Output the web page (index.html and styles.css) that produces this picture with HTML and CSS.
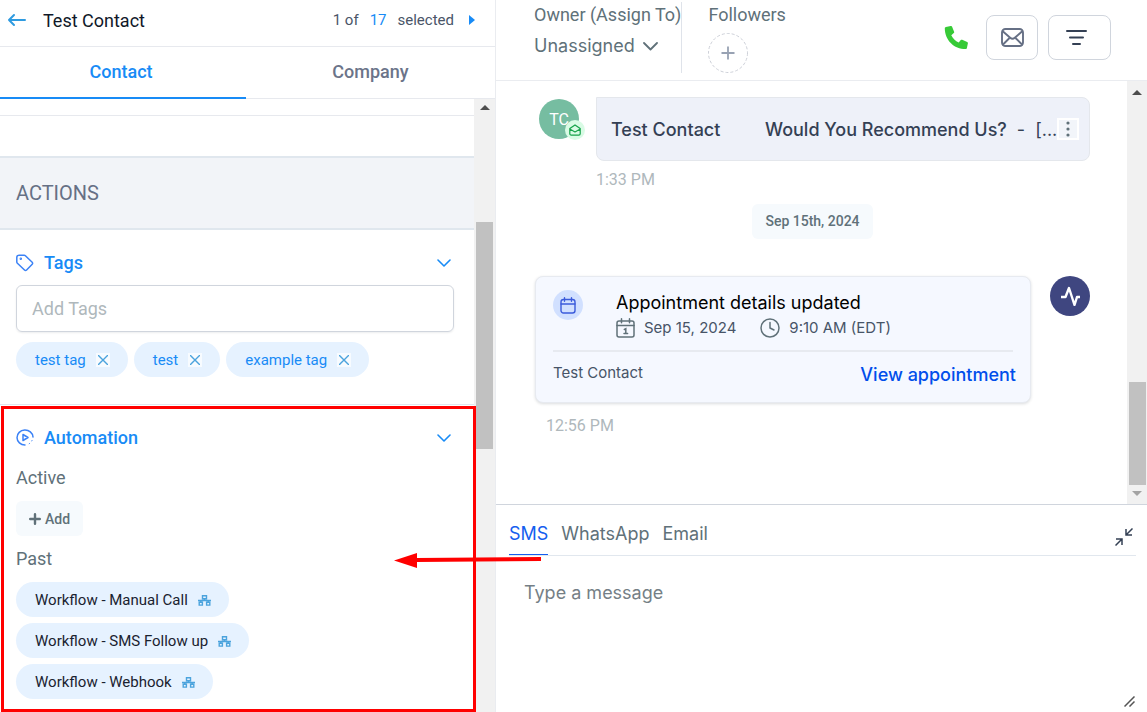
FILE: index.html
```
<!DOCTYPE html>
<html lang="en">
<head>
    <meta charset="UTF-8">
    <title>Test Contact</title>
    <link rel="stylesheet" href="styles.css">
</head>
<body>
    <aside class="sidebar">
        <header class="sidebar-header">
            <button class="icon-btn" aria-label="Back">
                <svg width="20" height="16" viewBox="0 0 20 16" fill="none" stroke="#2f9be0" stroke-width="2" stroke-linecap="round" stroke-linejoin="round"><path d="M18 8H2M7 3L2 8l5 5"/></svg>
            </button>
            <h1>Test Contact</h1>
            <div class="pager">
                <span>1 of</span>
                <a href="#">17</a>
                <span>selected</span>
                <button class="icon-btn" aria-label="Next contact">
                    <svg width="6" height="10" viewBox="0 0 6 10" fill="#188bf6"><path d="M0 0l6 5-6 5z"/></svg>
                </button>
            </div>
        </header>
        <nav class="tabs">
            <button class="tab active">Contact</button>
            <button class="tab">Company</button>
        </nav>

        <div class="sidebar-body">
            <div class="panel">
                <div class="panel-gap"></div>
                <h2 class="panel-title">ACTIONS</h2>

                <section class="section tags">
                    <button class="section-head">
                        <svg width="18" height="18" viewBox="0 0 18 18" fill="none" stroke="#3b82f6" stroke-width="1.5" stroke-linejoin="round"><path d="M3 1.2h5.2c.5 0 .9.2 1.2.5l6.8 6.6c.6.6.6 1.4 0 2l-5.6 5.7c-.6.6-1.5.6-2.1 0L1.4 9.2c-.4-.4-.6-.8-.6-1.3V3.4c0-1.2 1-2.2 2.2-2.2z"/><circle cx="4.8" cy="4.8" r=".5"/></svg>
                        <span>Tags</span>
                        <svg class="chevron" width="14" height="9" viewBox="0 0 14 9" fill="none" stroke="#188bf6" stroke-width="1.6" stroke-linecap="round" stroke-linejoin="round"><path d="M1 2l6 6 6-6"/></svg>
                    </button>
                    <input class="tag-input" type="text" placeholder="Add Tags" aria-label="Add Tags">
                    <div class="pills">
                        <span class="pill">test tag <button class="remove" aria-label="Remove test tag"><svg width="10" height="10" viewBox="0 0 10 10" stroke="#4ba3dd" stroke-width="1.4"><path d="M0 0l10 10M10 0L0 10"/></svg></button></span>
                        <span class="pill">test <button class="remove" aria-label="Remove test"><svg width="10" height="10" viewBox="0 0 10 10" stroke="#4ba3dd" stroke-width="1.4"><path d="M0 0l10 10M10 0L0 10"/></svg></button></span>
                        <span class="pill">example tag <button class="remove" aria-label="Remove example tag"><svg width="10" height="10" viewBox="0 0 10 10" stroke="#4ba3dd" stroke-width="1.4"><path d="M0 0l10 10M10 0L0 10"/></svg></button></span>
                    </div>
                </section>

                <section class="section automation">
                    <button class="section-head">
                        <svg width="18" height="18" viewBox="0 0 18 18" fill="none" stroke="#3b82f6" stroke-width="1.5" stroke-linecap="round" stroke-linejoin="round"><path d="M17 8A8 7.500 0 1 0 9 16"/><path d="M7 5.500l5 3-5 3z"/><path d="M16 11.500l-.2.400M13.500 14.500l-.3.200" stroke-width="1"/></svg>
                        <span>Automation</span>
                        <svg class="chevron" width="14" height="9" viewBox="0 0 14 9" fill="none" stroke="#188bf6" stroke-width="1.6" stroke-linecap="round" stroke-linejoin="round"><path d="M1 2l6 6 6-6"/></svg>
                    </button>
                    <h3>Active</h3>
                    <button class="add-btn">
                        <svg width="12" height="12" viewBox="0 0 12 12" stroke="#607179" stroke-width="2.4" stroke-linecap="round"><path d="M6 1.200v9.600M1.200 6h9.600"/></svg>
                        Add
                    </button>
                    <h3>Past</h3>
                    <div class="pills stacked">
                        <a href="#" class="pill workflow">Workflow - Manual Call <svg width="13" height="11" viewBox="0 0 13 11" fill="none" stroke="#4ba3dd" stroke-width="1.4"><path d="M4.500.7h4v3h-4zM1.200 7.300h3.200v2.800H1.200zM8.600 7.300h3.200v2.800H8.600zM6.500 3.700v1.800M0 5.500h13M2.800 5.500v1.800M10.200 5.500v1.800"/></svg></a>
                        <a href="#" class="pill workflow">Workflow - SMS Follow up <svg width="13" height="11" viewBox="0 0 13 11" fill="none" stroke="#4ba3dd" stroke-width="1.4"><path d="M4.500.7h4v3h-4zM1.200 7.300h3.200v2.800H1.200zM8.600 7.300h3.200v2.800H8.600zM6.500 3.700v1.800M0 5.500h13M2.800 5.500v1.800M10.200 5.500v1.800"/></svg></a>
                        <a href="#" class="pill workflow">Workflow - Webhook <svg width="13" height="11" viewBox="0 0 13 11" fill="none" stroke="#4ba3dd" stroke-width="1.4"><path d="M4.500.7h4v3h-4zM1.200 7.300h3.200v2.800H1.200zM8.600 7.300h3.200v2.800H8.600zM6.500 3.700v1.800M0 5.500h13M2.800 5.500v1.800M10.200 5.500v1.800"/></svg></a>
                    </div>
                    <div class="highlight"></div>
                    <svg class="pointer" width="148" height="16" viewBox="0 0 148 16"><path d="M147 7L22 8" stroke="#f00" stroke-width="4"/><path d="M0 8.500L23 1v15z" fill="#f00"/></svg>
                </section>
            </div>
            <div class="scrollbar">
                <i class="arrow up"></i>
                <div class="thumb thumb-side"></div>
            </div>
        </div>
    </aside>

    <main class="conversation">
        <header class="conv-header">
            <div class="owner">
                <span>Owner (Assign To)</span>
                <button class="owner-select">Unassigned
                    <svg width="15" height="9" viewBox="0 0 15 9" fill="none" stroke="#607179" stroke-width="1.8" stroke-linecap="round" stroke-linejoin="round"><path d="M1 1l6.500 6.500L14 1"/></svg>
                </button>
            </div>
            <div class="followers">
                <span>Followers</span>
                <button class="add-follower" aria-label="Add follower">
                    <svg width="40" height="40" viewBox="0 0 40 40" fill="none"><circle cx="20" cy="20" r="19.500" stroke="#cdd0d8" stroke-dasharray="3 2"/><path d="M20 13.500v13M13.500 20h13" stroke="#98a2b3" stroke-width="1.8"/></svg>
                </button>
            </div>
            <div class="conv-actions">
                <button class="icon-btn call" aria-label="Call">
                    <svg width="24" height="24" viewBox="0 0 24 24" fill="#37ca37"><path d="M1.900.9L6.700 0c.6-.1 1.100.2 1.400.7l2 5c.2.500.1 1-.3 1.400L7.300 9.200c1.500 3.200 4.100 5.800 7.400 7.400l2.100-2.500c.4-.4.900-.6 1.400-.3l5 2.100c.5.300.8.800.7 1.400l-1 4.800c-.1.600-.6 1-1.200 1C9.900 23.100.8 14 .8 2.200c0-.6.500-1.200 1.100-1.300z"/></svg>
                </button>
                <button class="box-btn" aria-label="Mark as unread">
                    <svg width="23" height="19" viewBox="0 0 23 19" fill="none" stroke="#667085" stroke-width="1.9" stroke-linecap="round" stroke-linejoin="round"><rect x="1" y="1" width="21" height="17" rx="3.500"/><path d="M2 3.500l7.200 6.200c1.400 1.200 3.200 1.200 4.600 0L21 3.500M2 16.500l6-6M21 16.500l-6-6"/></svg>
                </button>
                <button class="box-btn wide" aria-label="Filter">
                    <svg width="21" height="15" viewBox="0 0 21 15" stroke="#344054" stroke-width="2" stroke-linecap="round"><path d="M1 1h19M4 7.500h13M7 14h7"/></svg>
                </button>
            </div>
        </header>

        <div class="feed-wrap">
            <div class="feed">
                <div class="row">
                    <div class="avatar">TC
                        <span class="badge"><svg width="12" height="12" viewBox="0 0 12 12" fill="none" stroke="#16a34a" stroke-width="1.2" stroke-linejoin="round"><path d="M.8 4.500L6 .9l5.200 3.600v5.200c0 .8-.6 1.400-1.400 1.400H2.200c-.8 0-1.400-.6-1.400-1.400zM.8 5l5.200 3 5.200-3"/></svg></span>
                    </div>
                    <div class="message">
                        <div class="email-card">
                            <b class="sender">Test Contact</b>
                            <b>Would You Recommend Us?</b>
                            <span>-</span>
                            <span class="preview">[...</span>
                            <button class="more" aria-label="More"><svg width="4" height="16" viewBox="0 0 4 16" fill="#607179"><circle cx="2" cy="2" r="1.600"/><circle cx="2" cy="8" r="1.600"/><circle cx="2" cy="14" r="1.600"/></svg></button>
                        </div>
                        <time>1:33 PM</time>
                    </div>
                </div>

                <div class="date">Sep 15th, 2024</div>

                <div class="row own">
                    <div class="message">
                        <div class="appt-card">
                            <div class="appt-top">
                                <span class="appt-icon"><svg width="16" height="17" viewBox="0 0 16 17" fill="none" stroke="#3b5bdb" stroke-width="1.4" stroke-linecap="round"><rect x="1" y="2.500" width="14" height="13.500" rx="2.500"/><path d="M1 7h14M4.500.7v3.600M11.500.7v3.600"/></svg></span>
                                <div>
                                    <h4>Appointment details updated</h4>
                                    <div class="meta">
                                        <svg width="19" height="20" viewBox="0 0 19 20" fill="none" stroke="#607179" stroke-width="1.5" stroke-linecap="round"><rect x="1" y="3" width="17" height="16" rx="2"/><path d="M1 7.500h17M5.500.8v4M13.500.8v4M8.300 11.500l1.500-.7V15.500M8 15.500h3.600"/></svg>
                                        <span>Sep 15, 2024</span>
                                        <svg class="clock" width="20" height="20" viewBox="0 0 20 20" fill="none" stroke="#607179" stroke-width="1.5" stroke-linecap="round" stroke-linejoin="round"><circle cx="10" cy="10" r="9"/><path d="M10 4.500V10l4 2"/></svg>
                                        <span>9:10 AM (EDT)</span>
                                    </div>
                                </div>
                            </div>
                            <div class="appt-bottom">
                                <span>Test Contact</span>
                                <a href="#">View appointment</a>
                            </div>
                        </div>
                        <time>12:56 PM</time>
                    </div>
                    <div class="avatar activity">
                        <svg width="20" height="20" viewBox="0 0 20 20" fill="none" stroke="#fff" stroke-width="2.400" stroke-linejoin="round"><path d="M1 11h4.500L9 2l5.500 17 2.500-8h3"/></svg>
                    </div>
                </div>
            </div>
            <div class="scrollbar">
                <i class="arrow up"></i>
                <div class="thumb thumb-feed"></div>
                <i class="arrow down"></i>
            </div>
        </div>

        <div class="composer">
            <div class="channels">
                <button class="channel active">SMS</button>
                <button class="channel">WhatsApp</button>
                <button class="channel">Email</button>
                <button class="icon-btn collapse" aria-label="Collapse">
                    <svg width="18" height="18" viewBox="0 0 18 18" fill="none" stroke="#344054" stroke-width="1.5"><path d="M17.500.5l-6 6M11 1v6h6M.5 17.500l6-6M1 11h6v6"/></svg>
                </button>
            </div>
            <textarea placeholder="Type a message" aria-label="Type a message"></textarea>
            <svg class="grip" width="11" height="11" viewBox="0 0 11 11" stroke="#555" stroke-width="1.5"><path d="M.5 10.500l10-10M5.500 10.500l5-5"/></svg>
        </div>
    </main>
</body>
</html>
```
FILE: styles.css
```
* {
    box-sizing: border-box;
    margin: 0;
    padding: 0;
}

body {
    display: grid;
    grid-template-columns: 496px 1fr;
    height: 100vh;
    overflow: hidden;
    font-family: Roboto, sans-serif;
    font-size: 18px;
    color: #607179;
    background: #fff;
}

button, input, textarea {
    font: inherit;
    color: inherit;
    background: none;
    border: none;
}

button {
    cursor: pointer;
}

a {
    color: #188bf6;
    text-decoration: none;
}

svg {
    display: block;
    flex: none;
}

h1, h2, h3, h4 {
    font-size: 18px;
    font-weight: 400;
}

.icon-btn {
    display: flex;
}

/* sidebar */
.sidebar {
    display: flex;
    flex-direction: column;
    min-height: 0;
    border-right: 1px solid #eaecf0;
}

.sidebar-header {
    display: flex;
    align-items: center;
    height: 47px;
    padding: 0 20px 6px 7px;
    border-bottom: 1px solid #e7e9ee;
}

.sidebar-header h1 {
    margin-left: 16px;
    color: #101828;
}

.pager {
    display: flex;
    align-items: center;
    gap: 11px;
    margin-left: auto;
    font-size: 15px;
    color: #4a5568;
}

.pager .icon-btn {
    margin-left: 4px;
}

.tabs {
    display: flex;
    height: 52px;
    border-bottom: 1px solid #e7e9ee;
}

.tab {
    flex: 1;
    height: 52px;
    padding-bottom: 2px;
    font-weight: 500;
    color: #6b7489;
    border-bottom: 2px solid transparent;
}

.tab.active {
    flex: 0 0 246px;
    padding-right: 4px;
    color: #188bf6;
    border-color: #188bf6;
}

.sidebar-body {
    display: flex;
    flex: 1;
    min-height: 0;
}

.panel {
    flex: 1;
    min-width: 0;
}

.panel-gap {
    height: 57px;
    padding-top: 16px;
}

.panel-gap::before {
    content: "";
    display: block;
    border-top: 1px solid #e7e9ee;
}

.panel-title {
    padding: 0 16px;
    line-height: 70px;
    font-size: 20px;
    color: #667085;
    background: #f2f4f8;
    border: solid #e0e7ee;
    border-width: 2px 0;
}

.section {
    position: relative;
    padding: 20px 20px 0 16px;
}

.tags {
    padding-bottom: 27px;
    border-bottom: 1px solid #e0e7ee;
}

.section-head {
    display: flex;
    align-items: center;
    gap: 10px;
    width: 100%;
    height: 25px;
    font-weight: 500;
    color: #188bf6;
}

.chevron {
    margin-left: auto;
    margin-right: 3px;
}

.tag-input {
    display: block;
    width: 100%;
    height: 47px;
    margin: 10px 0;
    padding: 0 15px;
    border: 1px solid #d0d5dd;
    border-radius: 6px;
    box-shadow: 0 1px 2px rgba(16, 24, 40, 0.08);
}

.tag-input::placeholder {
    color: #afb8bc;
}

.pills {
    display: flex;
    gap: 6px;
}

.pills.stacked {
    flex-direction: column;
    align-items: flex-start;
}

.pill {
    display: flex;
    align-items: center;
    gap: 10px;
    height: 35px;
    padding: 0 18px 0 19px;
    font-size: 15px;
    color: #188bf6;
    background: #e6f2ff;
    border-radius: 18px;
}

.remove {
    padding: 2px;
    background: #f7fbff;
}

.workflow {
    color: #1a2230;
}

.workflow svg {
    margin-top: 2px;
}

.automation h3 {
    margin-top: 17px;
    line-height: 22px;
}

.add-btn {
    display: flex;
    align-items: center;
    gap: 4px;
    height: 35px;
    margin: 12px 0 0;
    padding: 0 13px;
    font-size: 14px;
    font-weight: 500;
    background: #f6fafd;
    border-radius: 6px;
}

.automation .add-btn + h3 {
    margin: 12px 0;
}

/* annotation drawn over the automation block */
.highlight {
    position: absolute;
    top: 1px;
    left: 1px;
    width: calc(100% + 1px);
    height: 306px;
    border: 3px solid #f00;
    z-index: 1;
}

.pointer {
    position: absolute;
    top: 147px;
    left: 394px;
    z-index: 2;
}

/* scrollbars */
.scrollbar {
    display: flex;
    flex-direction: column;
    align-items: center;
    width: 21px;
    background: #f1f1f1;
}

.arrow {
    margin-top: 6px;
    border: solid transparent;
    border-width: 0 5px;
}

.arrow.up {
    border-bottom: 5px solid #4d4d4d;
}

.arrow.down {
    border-top: 5px solid #a3a3a3;
}

.thumb {
    width: 17px;
    background: #c1c1c1;
}

.thumb-side {
    height: 227px;
    margin-top: 112px;
}

.thumb-feed {
    height: 103px;
    margin-top: auto;
}

.feed-wrap .scrollbar {
    width: 20px;
    padding: 3px 0 8px;
}

/* conversation */
.conversation {
    display: flex;
    flex-direction: column;
    min-width: 0;
    min-height: 0;
    font-family: Inter, sans-serif;
}

.conv-header {
    display: flex;
    height: 81px;
    padding: 2px 36px 0 38px;
    border-bottom: 1px solid #eaecf0;
}

.owner,
.followers {
    display: flex;
    flex-direction: column;
    align-items: flex-start;
    height: 71px;
    font-family: Roboto, sans-serif;
    line-height: 26px;
    white-space: nowrap;
}

.owner {
    border-right: 1px solid #dfe3ea;
}

.followers {
    gap: 5px;
    margin-left: 26px;
}

.owner-select {
    display: flex;
    align-items: center;
    gap: 8px;
    margin-top: 5px;
    font-family: Inter, sans-serif;
}

.conv-actions {
    display: flex;
    align-items: center;
    gap: 10px;
    height: 71px;
    margin-left: auto;
}

.call {
    margin-right: 8px;
}

.box-btn {
    display: flex;
    align-items: center;
    justify-content: center;
    width: 52px;
    height: 45px;
    border: 1px solid #d0d5dd;
    border-radius: 8px;
}

.box-btn.wide {
    width: 63px;
    padding-right: 6px;
}

.feed-wrap {
    display: flex;
    flex: 1;
    min-height: 0;
}

.feed {
    flex: 1;
    min-width: 0;
    padding: 16px 37px 0 39px;
}

.row {
    display: flex;
    gap: 17px;
    margin-left: 4px;
}

.row.own {
    gap: 19px;
    margin-left: 0;
}

.message {
    flex: 1;
    min-width: 0;
}

.avatar {
    position: relative;
    display: flex;
    align-items: center;
    justify-content: center;
    width: 40px;
    height: 40px;
    margin-top: 2px;
    font-family: Roboto, sans-serif;
    font-size: 16px;
    color: #fff;
    background: #76bda1;
    border-radius: 50%;
}

.avatar.activity {
    margin-top: 0;
    background: #3f4680;
}

.badge {
    position: absolute;
    right: -6px;
    bottom: -1px;
    padding: 4px;
    background: #d9fbe5;
    border-radius: 50%;
}

.email-card {
    display: flex;
    align-items: center;
    height: 64px;
    padding: 0 14px;
    color: #344054;
    white-space: nowrap;
    background: #eef1f9;
    border: 1px solid #e4e7ec;
    border-radius: 0 8px 8px 8px;
}

.email-card b {
    font-weight: 500;
}

.email-card .sender {
    flex: 0 0 154px;
}

.email-card span {
    margin-left: 10px;
}

.email-card .preview {
    flex: 1;
}

.more {
    display: flex;
    padding: 1px 7px;
    background: #f2f5fa;
    border: 2px solid #fff;
}

time {
    display: block;
    margin-top: 8px;
    font-family: Roboto, sans-serif;
    font-size: 16px;
    line-height: 22px;
    color: #afb8bc;
}

.own time {
    margin: 12px 0 0 11px;
}

.date {
    width: fit-content;
    margin: 13px auto 37px;
    padding: 0 13px;
    font-family: Roboto, sans-serif;
    font-size: 14px;
    font-weight: 500;
    line-height: 35px;
    background: #f6fafd;
    border-radius: 6px;
}

.appt-card {
    height: 127px;
    padding: 13px 14px 0 17px;
    font-size: 15px;
    color: #475467;
    background: #f5f8ff;
    border: 1px solid #e7eaf0;
    border-radius: 8px;
    box-shadow: 0 1px 3px rgba(16, 24, 40, 0.15);
}

.appt-top {
    display: flex;
    gap: 33px;
    height: 62px;
    margin-right: 3px;
    border-bottom: 2px solid #e7eaf0;
}

.appt-icon {
    display: flex;
    align-items: center;
    justify-content: center;
    width: 30px;
    height: 30px;
    background: #d1e0ff;
    border-radius: 50%;
}

.appt-card h4 {
    line-height: 26px;
    color: #000;
}

.meta {
    display: flex;
    align-items: center;
    gap: 9px;
    line-height: 24px;
}

.meta .clock {
    margin-left: 15px;
}

.appt-bottom {
    display: flex;
    justify-content: space-between;
    line-height: 42px;
}

.appt-bottom a {
    font-size: 18px;
    font-weight: 500;
    line-height: 46px;
    color: #004eeb;
}

.composer {
    position: relative;
    display: flex;
    flex-direction: column;
    height: 208px;
    padding: 0 11px 0 13px;
    border-top: 1px solid #d0d5dd;
}

.channels {
    display: flex;
    gap: 13px;
    height: 51px;
    border-bottom: 1px solid #e1e7ee;
}

.channel {
    height: 50px;
    padding-top: 8px;
    border-bottom: 1px solid transparent;
}

.channel.active {
    color: #155eef;
    border-color: #155eef;
}

.collapse {
    align-self: center;
    margin: 14px 3px 0 auto;
}

.composer textarea {
    flex: 1;
    padding: 25px 15px;
    line-height: 24px;
    resize: none;
    outline: none;
}

.composer textarea::placeholder {
    color: #757f86;
}

.grip {
    position: absolute;
    right: 12px;
    bottom: 5px;
}
```
